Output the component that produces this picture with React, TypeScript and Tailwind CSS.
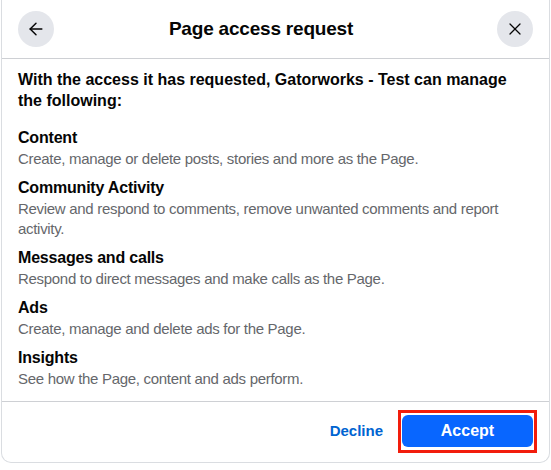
import { ArrowLeft, X } from "lucide-react"

// ─── Data ─────────────────────────────────────────────────

const permissions = [
  { title: "Content", desc: "Create, manage or delete posts, stories and more as the Page." },
  { title: "Community Activity", desc: "Review and respond to comments, remove unwanted comments and report activity." },
  { title: "Messages and calls", desc: "Respond to direct messages and make calls as the Page." },
  { title: "Ads", desc: "Create, manage and delete ads for the Page." },
  { title: "Insights", desc: "See how the Page, content and ads perform." },
]

export default function App() {
  return (
    <div className="min-h-screen bg-white text-[#050505] font-['Liberation_Sans',Arial,sans-serif]">
      <div className="ml-px w-[549px] h-[463px] bg-white border-x border-b border-[#dadde1] rounded-b-[10px] flex flex-col">
        {/* Header */}
        <div className="h-[59px] border-b border-[#ced0d4] flex items-center px-4">
          <button className="w-9 h-9 rounded-full bg-[#e4e6eb] flex items-center justify-center text-[#050505]">
            <ArrowLeft size={20} strokeWidth={1.75} />
          </button>
          <h1 className="flex-1 text-center pr-[29px] text-[19px] tracking-[-0.2px] font-bold">
            Page access request
          </h1>
          <button className="w-9 h-9 rounded-full bg-[#e4e6eb] flex items-center justify-center text-[#050505]">
            <X size={20} strokeWidth={1.5} />
          </button>
        </div>

        {/* Body */}
        <div className="flex-1 px-4 pt-[10px]">
          <p className="max-w-[505px] text-[16px] leading-[21px] font-bold">
            With the access it has requested, Gatorworks - Test can manage the following:
          </p>
          <div className="mt-[17px] flex flex-col gap-[9px]">
            {permissions.map(p => (
              <div key={p.title}>
                <div className="text-[16px] leading-[20px] tracking-[-0.2px] font-bold">{p.title}</div>
                <div className="text-[15px] leading-[20px] tracking-[-0.3px] text-[#65676b] mt-[1px]">{p.desc}</div>
              </div>
            ))}
          </div>
        </div>

        {/* Footer */}
        <div className="h-[61px] border-t border-[#ced0d4] flex items-center justify-end gap-[15px] pl-4 pr-3 pb-[2px]">
          <button className="text-[15px] font-bold text-[#0064d1]">Decline</button>
          <span className="border-[3px] border-[#f21d0c] px-px pt-[2px] pb-[3px]">
            <button className="block w-[131px] h-[32px] rounded-[6px] bg-[#0866ff] text-white text-[16px] font-bold">
              Accept
            </button>
          </span>
        </div>
      </div>
    </div>
  )
}
